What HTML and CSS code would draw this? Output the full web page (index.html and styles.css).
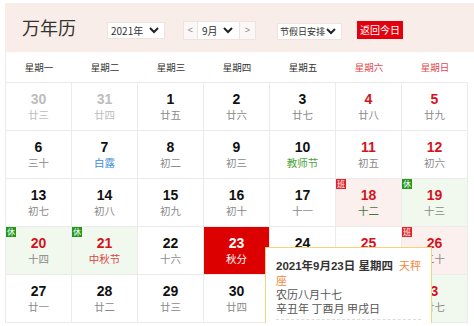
FILE: index.html
```html
<!DOCTYPE html>
<html lang="zh-CN">
<head>
<meta charset="utf-8">
<title>万年历</title>
<link rel="stylesheet" href="styles.css">
</head>
<body>
<div class="cal">
  <div class="head">
    <h1 class="title">万年历</h1>
    <div class="sel sel-year"><span>2021年</span><svg class="chev" viewBox="0 0 10 7" width="10" height="7"><polyline points="1,1 5,5 9,1"/></svg></div>
    <div class="month-group">
      <span class="arrow">&lt;</span>
      <div class="sel sel-month"><span>9月</span><svg class="chev" viewBox="0 0 10 7" width="10" height="7"><polyline points="1,1 5,5 9,1"/></svg></div>
      <span class="arrow arrow-r">&gt;</span>
    </div>
    <div class="sel sel-hol"><span>节假日安排</span><svg class="chev" viewBox="0 0 10 7" width="10" height="7"><polyline points="1,1 5,5 9,1"/></svg></div>
    <button class="today-btn">返回今日</button>
  </div>

  <div class="week">
    <span>星期一</span><span>星期二</span><span>星期三</span><span>星期四</span><span>星期五</span><span class="we">星期六</span><span class="we">星期日</span>
  </div>

  <div class="grid">
    <div class="cell other"><b>30</b><i>廿三</i></div>
    <div class="cell other"><b>31</b><i>廿四</i></div>
    <div class="cell"><b>1</b><i>廿五</i></div>
    <div class="cell"><b>2</b><i>廿六</i></div>
    <div class="cell"><b>3</b><i>廿七</i></div>
    <div class="cell red"><b>4</b><i>廿八</i></div>
    <div class="cell red"><b>5</b><i>廿九</i></div>

    <div class="cell"><b>6</b><i>三十</i></div>
    <div class="cell"><b>7</b><i class="term">白露</i></div>
    <div class="cell"><b>8</b><i>初二</i></div>
    <div class="cell"><b>9</b><i>初三</i></div>
    <div class="cell"><b>10</b><i class="fest-g">教师节</i></div>
    <div class="cell red"><b>11</b><i>初五</i></div>
    <div class="cell red"><b>12</b><i>初六</i></div>

    <div class="cell"><b>13</b><i>初七</i></div>
    <div class="cell"><b>14</b><i>初八</i></div>
    <div class="cell"><b>15</b><i>初九</i></div>
    <div class="cell"><b>16</b><i>初十</i></div>
    <div class="cell"><b>17</b><i>十一</i></div>
    <div class="cell red work"><span class="tag tag-work">班</span><b>18</b><i class="dk-g">十二</i></div>
    <div class="cell red rest"><span class="tag tag-rest">休</span><b>19</b><i>十三</i></div>

    <div class="cell red rest"><span class="tag tag-rest">休</span><b>20</b><i>十四</i></div>
    <div class="cell red rest"><span class="tag tag-rest">休</span><b>21</b><i class="fest-r">中秋节</i></div>
    <div class="cell"><b>22</b><i>十六</i></div>
    <div class="cell today"><b>23</b><i>秋分</i></div>
    <div class="cell"><b>24</b><i>十八</i></div>
    <div class="cell red"><b>25</b><i>十九</i></div>
    <div class="cell red work"><span class="tag tag-work">班</span><b>26</b><i>二十</i></div>

    <div class="cell"><b>27</b><i>廿一</i></div>
    <div class="cell"><b>28</b><i>廿二</i></div>
    <div class="cell"><b>29</b><i>廿三</i></div>
    <div class="cell"><b>30</b><i>廿四</i></div>
    <div class="cell red rest"><span class="tag tag-rest">休</span><b>1</b><i class="fest-r">国庆节</i></div>
    <div class="cell red rest"><span class="tag tag-rest">休</span><b>2</b><i>廿六</i></div>
    <div class="cell red rest"><span class="tag tag-rest">休</span><b>3</b><i>廿七</i></div>
  </div>

  <div class="tip">
    <p class="tip-l1"><strong>2021年9月23日 星期四</strong><span class="zodiac">天秤座</span></p>
    <p>农历八月十七</p>
    <p>辛丑年 丁酉月 甲戌日</p>
    <p class="tip-more"><span class="t-blue">节气秋分</span><span class="t-badge">宜</span><span class="t-green">出行</span></p>
  </div>
</div>
</body>
</html>
```

FILE: styles.css
```css
* { box-sizing: border-box; }

html, body {
  margin: 0;
  padding: 0;
  background: #fff;
  overflow: hidden;
}

body {
  font-family: "Liberation Sans", "Noto Sans CJK SC", sans-serif;
  color: #333;
}

.cal {
  position: relative;
  padding: 3px 0 0 5px;
}

/* ---------- header ---------- */
.head {
  width: 469px;
  height: 49px;
  background: #f9ede9;
  display: flex;
  align-items: center;
  padding: 5px 0 0 17px;
}

.title {
  margin: 0 0 6px 0;
  font-family: "Noto Sans CJK SC", sans-serif;
  font-weight: normal;
  font-size: 18px;
  line-height: 22px;
  color: #333;
  width: 54px;
  white-space: nowrap;
}

.sel {
  height: 17px;
  background: #fff;
  border: 1px solid #efe3df;
  display: flex;
  align-items: center;
  justify-content: space-between;
  font-family: "Noto Sans CJK SC", sans-serif;
  font-size: 10px;
  color: #333;
  white-space: nowrap;
}

.chev {
  display: block;
  flex: none;
  fill: none;
  stroke: #222;
  stroke-width: 2;
}

.sel-year {
  width: 58px;
  margin-left: 31px;
  padding: 0 5px 0 3px;
}

.month-group {
  margin-left: 18px;
  display: flex;
  height: 19px;
}

.arrow {
  width: 15px;
  height: 19px;
  background: #fbf7f6;
  border: 1px solid #efe3df;
  color: #888;
  font-size: 9px;
  display: flex;
  align-items: center;
  justify-content: center;
}

.arrow-r { width: 17px; }

.sel-month {
  width: 41px;
  height: 19px;
  padding: 0 6px 0 4px;
  border-left: 0;
  border-right: 0;
}

.sel-hol {
  width: 65px;
  margin-left: 21px;
  margin-top: 3px;
  padding: 0 5px 0 2px;
  font-size: 9px;
}

.today-btn {
  margin-left: 15px;
  width: 46px;
  height: 18px;
  padding: 0;
  border: 0;
  background: #e3000e;
  color: #fff;
  font-family: "Noto Sans CJK SC", sans-serif;
  font-size: 10px;
  line-height: 18px;
  white-space: nowrap;
}

/* ---------- week header ---------- */
.week {
  width: 463px;
  height: 31px;
  display: grid;
  grid-template-columns: repeat(7, 66px);
  align-items: center;
  border-left: 1px solid #ebebeb;
  border-bottom: 1px solid #ebebeb;
  font-family: "Noto Sans CJK SC", sans-serif;
  font-size: 9.5px;
  color: #333;
  text-align: center;
}

.week .we { color: #e2474b; }

/* ---------- grid ---------- */
.grid {
  width: 463px;
  display: grid;
  grid-template-columns: repeat(7, 66px);
  grid-auto-rows: 48px;
  border-left: 1px solid #ebebeb;
}

.cell {
  position: relative;
  border-right: 1px solid #ebebeb;
  border-bottom: 1px solid #ebebeb;
  display: flex;
  flex-direction: column;
  align-items: center;
  padding-top: 7px;
  background: #fff;
}

.cell b {
  font-family: "Liberation Sans", sans-serif;
  font-weight: bold;
  font-size: 14px;
  line-height: 18px;
  color: #111;
}

.cell i {
  font-style: normal;
  font-family: "Noto Sans CJK SC", sans-serif;
  font-size: 10.5px;
  line-height: 13px;
  color: #8a8a8a;
}

.cell.other b,
.cell.other i { color: #bdbdbd; }

.cell.red b { color: #d3141d; }

.cell.rest { background: #f1f8ed; }
.cell.work { background: #fcf0ee; }

.cell i.term { color: #3b8ed4; }
.cell i.fest-g { color: #4ca53a; }
.cell i.fest-r { color: #d9474a; }
.cell i.dk-g { color: #3e7a3e; }

.cell.today { background: #dd0000; }
.cell.today b,
.cell.today i { color: #fff; }

.tag {
  position: absolute;
  left: 0;
  top: 0;
  width: 10px;
  height: 10px;
  font-family: "Noto Sans CJK SC", sans-serif;
  font-size: 8px;
  line-height: 10px;
  text-align: center;
  color: #fff;
}

.tag-rest { background: #23981f; }
.tag-work { background: #e2222a; }

/* ---------- tooltip ---------- */
.tip {
  position: absolute;
  left: 265px;
  top: 247px;
  width: 167px;
  padding: 10px 10px;
  background: #fff;
  border: 1px solid #f2d479;
  font-family: "Noto Sans CJK SC", sans-serif;
  font-size: 11px;
  line-height: 14px;
  color: #555;
}

.tip p { margin: 0; }

.tip-l1 strong {
  font-family: "Liberation Sans", "Noto Sans CJK SC", sans-serif;
  font-size: 11.5px;
  color: #333;
}

.zodiac {
  margin-left: 6px;
  color: #f28a3f;
}

.tip-more {
  margin-top: 4px !important;
  padding-top: 4px;
  border-top: 1px dashed #dcdcdc;
  display: flex;
  align-items: center;
}

.t-blue { color: #3b8ed4; }
.t-badge {
  margin-left: 20px;
  background: #2aa52a;
  color: #fff;
  padding: 0 2px;
}
.t-green { margin-left: 8px; color: #4ca53a; }
```
